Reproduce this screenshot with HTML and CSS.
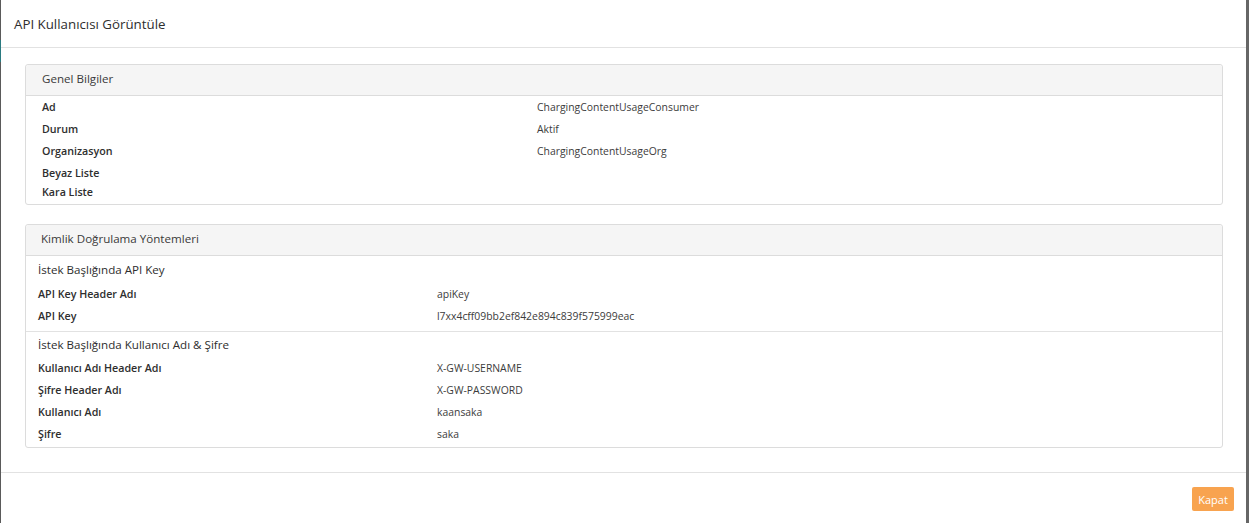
FILE: index.html
```html
<!DOCTYPE html>
<html lang="tr">
<head>
<meta charset="utf-8">
<title>API Kullanıcısı Görüntüle</title>
<link rel="stylesheet" href="styles.css">
</head>
<body>
<div class="screen">
  <div class="edge-left"></div>
  <div class="modal">
    <div class="modal-header">
      <h4 class="modal-title">API Kullanıcısı Görüntüle</h4>
    </div>
    <div class="modal-body">
      <div class="panel">
        <div class="panel-heading">Genel Bilgiler</div>
        <div class="panel-body p1">
          <div class="row"><span class="label">Ad</span><span class="value">ChargingContentUsageConsumer</span></div>
          <div class="row"><span class="label">Durum</span><span class="value">Aktif</span></div>
          <div class="row"><span class="label">Organizasyon</span><span class="value">ChargingContentUsageOrg</span></div>
          <div class="row short1"><span class="label">Beyaz Liste</span><span class="value"></span></div>
          <div class="row short2"><span class="label">Kara Liste</span><span class="value"></span></div>
        </div>
      </div>
      <div class="panel">
        <div class="panel-heading">Kimlik Doğrulama Yöntemleri</div>
        <div class="section s1">
          <div class="subheading">İstek Başlığında API Key</div>
          <div class="row r2"><span class="label">API Key Header Adı</span><span class="value">apiKey</span></div>
          <div class="row r2"><span class="label">API Key</span><span class="value">l7xx4cff09bb2ef842e894c839f575999eac</span></div>
        </div>
        <div class="section s2">
          <div class="subheading">İstek Başlığında Kullanıcı Adı &amp; Şifre</div>
          <div class="row r2"><span class="label">Kullanıcı Adı Header Adı</span><span class="value">X-GW-USERNAME</span></div>
          <div class="row r2"><span class="label">Şifre Header Adı</span><span class="value">X-GW-PASSWORD</span></div>
          <div class="row r2"><span class="label">Kullanıcı Adı</span><span class="value">kaansaka</span></div>
          <div class="row r2"><span class="label">Şifre</span><span class="value">saka</span></div>
        </div>
      </div>
    </div>
    <div class="modal-footer">
      <button class="btn-close" type="button">Kapat</button>
    </div>
  </div>
  <div class="edge-right"></div>
</div>
</body>
</html>
```

FILE: styles.css
```css
* { box-sizing: border-box; }
html, body { margin: 0; padding: 0; }
body {
  background: #5a5a5a;
  font-family: "Open Sans", "Liberation Sans", sans-serif;
  color: #333;
  width: 1249px;
  height: 523px;
  overflow: hidden;
}
.screen {
  display: flex;
  height: 523px;
}
.edge-left {
  width: 1px;
  background: linear-gradient(#5a5a5a 0, #5a5a5a 40px, #2a7a80 40px, #2a7a80 62px, #5a5a5a 62px);
}
.edge-right {
  width: 3px;
  background: #666;
}
.modal {
  width: 1245px;
  background: #fff;
  display: flex;
  flex-direction: column;
}
.modal-header {
  height: 48px;
  border-bottom: 1px solid #e2e2e2;
  padding: 0 13px;
  display: flex;
  align-items: center;
}
.modal-title {
  margin: 0;
  font-size: 13.3px;
  font-weight: 400;
  color: #2e2e2e;
}
.modal-body {
  padding: 16px 23px 4px 24px;
  height: 425px;
  border-bottom: 1px solid #e2e2e2;
}
.panel {
  border: 1px solid #dcdcdc;
  border-radius: 3px;
  margin-bottom: 19px;
}
.panel-heading {
  background: #f5f5f5;
  border-bottom: 1px solid #dcdcdc;
  height: 31px;
  padding: 0 16px 3px 16px;
  display: flex;
  align-items: center;
  font-size: 11.6px;
  color: #3a3a3a;
  border-radius: 3px 3px 0 0;
}
.panel + .panel .panel-heading { padding-left: 15px; }
.panel-body.p1 {
  padding: 0 16px 3px 16px;
}
.row {
  display: flex;
  align-items: center;
  height: 22px;
  font-size: 10.5px;
}
.row.short1 { height: 21px; }
.row.short2 { height: 18px; }
.label {
  font-weight: 600;
  font-size: 10.7px;
  color: #2e2e2e;
}
.p1 .label { width: 495px; }
.r2 .label { width: 399px; }
.value {
  font-size: 10.4px;
  color: #3c3c3c;
}
.section { padding: 0 12px; }
.section.s1 {
  padding-bottom: 4px;
  border-bottom: 1px solid #e2e2e2;
}
.section.s2 { padding-bottom: 2px; }
.subheading {
  height: 27px;
  display: flex;
  align-items: center;
  font-size: 11.6px;
  color: #2e2e2e;
}
.s2 .subheading { height: 25px; }
.modal-footer {
  flex: 1;
  display: flex;
  justify-content: flex-end;
  align-items: flex-start;
  padding: 14px 12px 0 0;
}
.btn-close {
  background: #f8a34f;
  border: none;
  border-radius: 2px;
  color: #fff;
  font-family: "Open Sans", "Liberation Sans", sans-serif;
  font-size: 11px;
  width: 42px;
  height: 24px;
  padding: 0;
}
```
